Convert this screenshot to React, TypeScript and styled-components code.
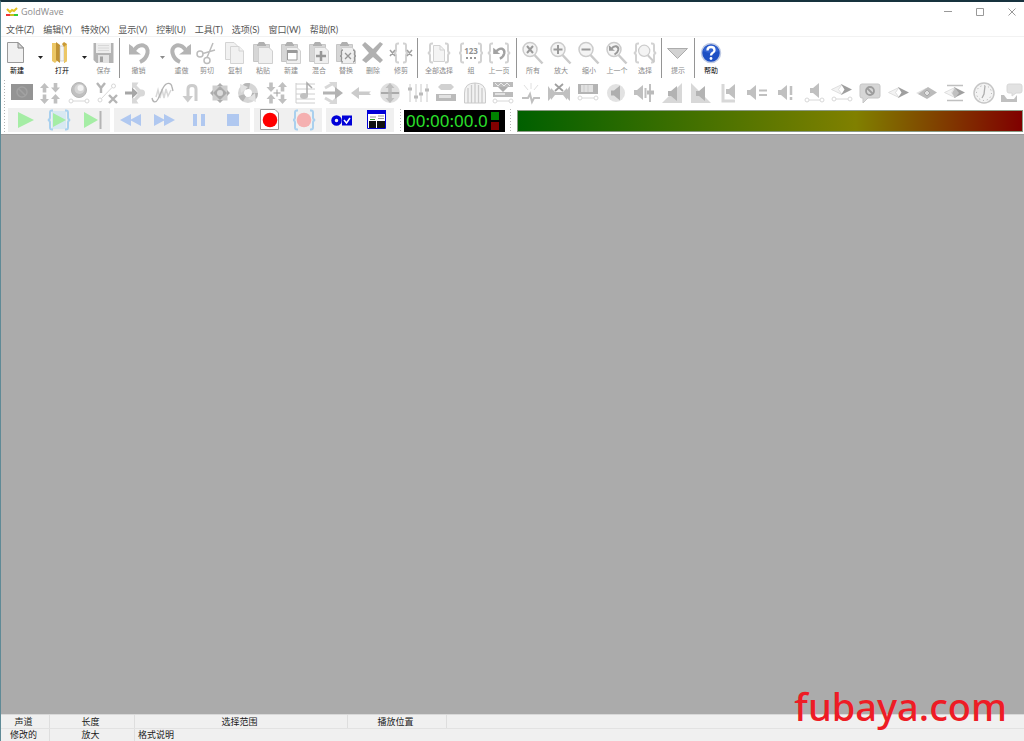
import React from "react";
import styled, { createGlobalStyle } from "styled-components";

const uiFont = `"Open Sans", "Noto Sans CJK SC", sans-serif`;

const GlobalStyle = createGlobalStyle`
  * { box-sizing: border-box; }
  body { margin: 0; background: #fff; font-family: ${uiFont}; }
  button { border: 0; margin: 0; padding: 0; background: none; font: inherit; color: inherit; }
`;

const Window = styled.div`
  position: relative;
  display: flex;
  flex-direction: column;
  min-height: 100vh;
  overflow: hidden;
  background: #fff;
  border-top: 2px solid #17323e;
  border-left: 1px solid #5f8a96;
`;

const TitleBar = styled.header`
  display: flex;
  align-items: center;
  height: 20px;
  padding-left: 5px;
`;

const Title = styled.h1`
  flex: 1;
  margin: 0 0 0 3px;
  font-size: 9px;
  line-height: 12px;
  font-weight: 400;
  color: #8c8c8c;
`;

const WindowButton = styled.button`
  display: flex;
  align-items: center;
  justify-content: center;
  width: 32px;
  height: 20px;
`;

const WindowControls = styled.div`
  display: flex;
  margin-right: -4px;
`;

const MenuBar = styled.nav`
  display: flex;
  align-items: center;
  gap: 9px;
  height: 15px;
  padding-left: 5px;
  border-bottom: 1px solid #f2f2f2;
`;

const MenuItem = styled.button`
  padding-top: 1px;
  font: 9px/14px Lato, "Noto Sans CJK SC", sans-serif;
  white-space: nowrap;
  color: #555;
`;

const MainBar = styled.div`
  display: flex;
  height: 42px;
  padding: 1px 0 0 1px;
`;

const ToolButton = styled.button<{ $w: number; $on?: boolean }>`
  display: flex;
  flex-direction: column;
  align-items: center;
  flex: none;
  width: ${(p) => p.$w}px;
  padding-top: 3px;
  font-size: 7px;
  line-height: 12px;
  white-space: nowrap;
  color: ${(p) => (p.$on ? "#000" : "#8a8a8a")};
`;

const Caret = styled.button<{ $on?: boolean }>`
  display: flex;
  justify-content: center;
  flex: none;
  width: 16px;
  padding-top: 18px;
  color: ${(p) => (p.$on ? "#222" : "#8c8c8c")};
`;

const Divider = styled.div<{ $w?: number }>`
  flex: none;
  width: ${(p) => p.$w || 5}px;
  height: 40px;
  background: linear-gradient(#959595, #959595) center / 1px 100% no-repeat;
`;

const LowerBars = styled.div`
  display: flex;
  padding-left: 3px;
  border-bottom: 1px solid #9c9c9c;
`;

const Grip = styled.div<{ $m?: number }>`
  flex: none;
  width: 1px;
  margin: 1px ${(p) => p.$m || 0}px;
  background: repeating-linear-gradient(#b4b4b4 0 1px, transparent 1px 3px);
`;

const BarStack = styled.div`
  flex: 1;
  min-width: 0;
`;

const EffectBar = styled.div`
  display: flex;
  justify-content: space-between;
  height: 28px;
  padding: 2px 0 0 5px;
`;

const EffectButton = styled.button`
  display: block;
  flex: none;
  width: 24px;
  height: 24px;
  opacity: 0.85;
`;

const ControlBar = styled.div`
  display: flex;
  height: 27px;
  padding: 1px 0 2px 3px;
`;

const ControlGroup = styled.div`
  display: flex;
  flex: none;
  margin-right: 4px;
  background: #f0f0f0;
`;

const ControlButton = styled.button`
  display: flex;
  align-items: center;
  justify-content: center;
  width: 34px;
  height: 24px;
`;

const Clock = styled.div`
  display: flex;
  align-items: center;
  justify-content: space-between;
  flex: none;
  width: 101px;
  height: 22px;
  margin: 2px 0 0 1px;
  padding: 0 6px 0 2px;
  background: #000;
  color: #2be02b;
  font: 17px/22px "Noto Sans", sans-serif;
`;

const Lamps = styled.div`
  display: grid;
  gap: 2px;
`;

const Lamp = styled.span<{ $c: string }>`
  width: 8px;
  height: 8px;
  background: ${(p) => p.$c};
`;

const Meter = styled.div`
  flex: 1;
  height: 22px;
  margin: 2px 1px 0 1px;
  border: 1px solid #8a9a84;
  background: linear-gradient(90deg, #006000, #808000 67%, #800000);
`;

const Workspace = styled.main`
  flex: 1;
  background: #ababab;
`;

const StatusBar = styled.footer`
  background: #f0f0f0;
  border-top: 1px solid #d9d9d9;
  color: #1a1a1a;
  font-size: 9px;
  line-height: 13px;
`;

const StatusRow = styled.div`
  display: flex;
  height: 13px;
  & + & { border-top: 1px solid #e2e2e2; line-height: 12px; }
`;

const StatusCell = styled.div<{ $w?: number; $left?: boolean }>`
  flex: ${(p) => (p.$w ? "none" : 1)};
  width: ${(p) => (p.$w ? `${p.$w}px` : "auto")};
  padding: 0 ${(p) => (p.$left ? 3 : 4)}px 0 ${(p) => (p.$left ? 3 : 1)}px;
  text-align: ${(p) => (p.$left ? "left" : "center")};
  border-right: ${(p) => (p.$w ? 1 : 0)}px solid #dedede;
`;

const Watermark = styled.div`
  position: absolute;
  right: 17px;
  bottom: 7px;
  color: #ee1c25;
  font: 500 38px/56px "Noto Sans", sans-serif;
`;

/* ---------- icon helpers ---------- */

const L = "#d2d2d2";
const M = "#b6b6b6";
const D = "#8f8f8f";

const Svg = ({ w = 24, h = 24, children }: { w?: number; h?: number; children: React.ReactNode }) => (
  <svg width={w} height={h} viewBox={`0 0 ${w} ${h}`} fill="none" aria-hidden="true" display="block">
    {children}
  </svg>
);

const Arrow = ({ x, y, r = 0, c = M }: { x: number; y: number; r?: number; c?: string }) => (
  <path transform={`translate(${x} ${y}) rotate(${r})`} d="M0-5 4.500 0H1.800V4.500H-1.800V0H-4.500Z" fill={c} />
);

const Nodes = ({ y = 20, a = 4, b = 20 }: { y?: number; a?: number; b?: number }) => (
  <g stroke={L}>
    <circle cx={a} cy={y} r="2" />
    <circle cx={b} cy={y} r="2" />
    <path d={`M${a + 2} ${y}H${b - 2}`} />
  </g>
);

const Speaker = ({ x = 0, y = 0, c = M }: { x?: number; y?: number; c?: string }) => (
  <path transform={`translate(${x} ${y})`} d="M0 4H3L9-1V14L3 9H0Z" fill={c} />
);

const Braces = ({ c = L, x1 = 2, x2 = 22 }: { c?: string; x1?: number; x2?: number }) => (
  <path
    stroke={c}
    strokeWidth="2"
    d={`M${x1 + 4} 2.500h-1q-2 0-2 2v5q0 2-2 2.500 2 .5 2 2.500v5q0 2 2 2h1M${x2 - 4} 2.500h1q2 0 2 2v5q0 2 2 2.500-2 .5-2 2.500v5q0 2-2 2h-1`}
  />
);

const Board = () => (
  <>
    <path d="M2.500 3.500H18.500V20.500H2.500Z" fill="#d6d6d6" stroke="#c6c6c6" />
    <path d="M6 4 8 1H13L15 4V5H6Z" fill="#b0b0b0" />
    <path d="M7.500 6.500H18L21.500 10V22.500H7.500Z" fill="#efefef" stroke="#cfcfcf" />
  </>
);

const Lens = () => (
  <>
    <path d="M13.500 14 21.500 22.500" stroke="#cacaca" strokeWidth="2.500" />
    <circle cx="9" cy="8.500" r="7" fill="#f4f4f4" stroke="#cccccc" strokeWidth="1.500" />
  </>
);

const Turn = ({ c = "#b4b4b4", tr }: { c?: string; tr?: string }) => (
  <g transform={tr}>
    <path d="M2 3 5.500 5.500 8.500 9.500 14 13.500H2Z" fill={c} />
    <path d="M7 9.500Q11 3.500 16.500 4.500 21.500 6.500 20.500 12 19 18.500 13 21" stroke={c} strokeWidth="4" />
  </g>
);

/* ---------- main toolbar icons ---------- */

const I: Record<string, React.ReactNode> = {
  new: (
    <>
      <path d="M2.500 1.500H13L18.500 7V21.500H2.500Z" fill="#f1f1f1" stroke="#9a9a9a" />
      <path d="M13 1.500V7H18.500Z" fill="#d8d8d8" stroke="#888" />
    </>
  ),
  open: (
    <>
      <path d="M2 2H7V20L5 22 2 20Z" fill="#ecc766" />
      <path d="M6 1 10 4V22L6 19Z" fill="#bf9234" />
      <path d="M10 5H14V20H10Z" fill="#f4f4f4" stroke="#bbb" strokeWidth=".6" />
      <path d="M12 3 14 1 17 3V20L14 22V6Z" fill="#c99a37" />
      <path d="M14 6 17 3V20L14 22Z" fill="#ecc766" />
    </>
  ),
  save: (
    <>
      <path d="M1.500 2H21.500V22H4.500L1.500 19Z" fill="#b3b3b3" />
      <path d="M4 2H19V12H4Z" fill="#ededed" />
      <path d="M6 4.500H17M6 7H17M6 9.500H17" stroke="#d8d8d8" />
      <path d="M6 14H17V22H6Z" fill="#e2e2e2" />
      <path d="M8 15.500H11V21H8Z" fill="#a2a2a2" />
    </>
  ),
  undo: <Turn />,
  redo: <Turn tr="matrix(-1 0 0 1 23 0)" />,
  cut: (
    <g stroke="#bcbcbc" strokeWidth="1.500">
      <circle cx="5" cy="13" r="3" />
      <circle cx="12" cy="19.500" r="3" />
      <path d="M8 12.500 20 9M12 16.500 18 2" />
    </g>
  ),
  copy: (
    <g fill="#f1f1f1" stroke="#d4d4d4">
      <path d="M2.500 1.500H11L14.500 5V18.500H2.500Z" />
      <path d="M7.500 5.500H16L20.500 10V22.500H7.500Z" />
      <path d="M16 5.500V10H20.500" />
    </g>
  ),
  paste: <Board />,
  pasteNew: (
    <>
      <Board />
      <path d="M8.500 10H18V19H8.500Z" fill="#fff" stroke="#999" />
      <path d="M8 9H18.500V12H8Z" fill="#999" />
    </>
  ),
  mix: (
    <>
      <Board />
      <path d="M14 10V20M9 15H19" stroke="#979797" strokeWidth="2.500" />
    </>
  ),
  replace: (
    <>
      <Board />
      <path d="M9 9q-2 0-1.500 3t-1.500 3q2 0 1.500 3T9 21M19 9q2 0 1.500 3t1.500 3q-2 0-1.500 3t-1.500 3M11 12 17 18M17 12 11 18" stroke="#969696" strokeWidth="1.300" />
    </>
  ),
  remove: <path d="M1 4 4 1 12 8 19 1 22 3 15 12 22 19 19 22 12 16 5 22 1 19 8 12Z" fill="#b0b0b0" />,
  trim: (
    <>
      <Braces x1={6} x2={18} />
      <path d="M1 9 6 15M6 9 1 15M18 9 23 15M23 9 18 15" stroke="#a0a0a0" strokeWidth="1.500" />
    </>
  ),
  all: (
    <>
      <Braces />
      <path d="M6.500 4.500H13L17.500 9V20.500H6.500Z" fill="#f4f4f4" stroke="#d2d2d2" />
      <path d="M13 4.500V9H17.500" stroke="#d2d2d2" />
    </>
  ),
  group: (
    <>
      <Braces x1={1} x2={23} />
      <text x="12" y="13" textAnchor="middle" fontFamily="Open Sans, sans-serif" fontWeight="700" fontSize="8" fill="#8f8f8f">123</text>
      <path d="M7 17H9M11 17H13M15 17H17" stroke="#999" strokeWidth="2" />
    </>
  ),
  prev: (
    <>
      <Braces />
      <Turn tr="translate(5 5) scale(.6)" c="#a2a2a2" />
    </>
  ),
  zAll: (<><Lens /><path d="M6 5 12 12M12 5 6 12" stroke="#999" strokeWidth="2" /></>),
  zIn: (<><Lens /><path d="M9 4V13M4.500 8.500H13.500" stroke="#999" strokeWidth="2" /></>),
  zOut: (<><Lens /><path d="M4.500 8.500H13.500" stroke="#999" strokeWidth="2" /></>),
  zPrev: (<><Lens /><Turn tr="translate(3 3) scale(.5)" c="#999" /></>),
  zSel: (<><Braces /><g transform="translate(4 3) scale(.8)"><Lens /></g></>),
  hint: <path d="M1.500 7.500H21.500L11.500 17.500Z" fill="#d2d2d2" stroke="#acacac" />,
  help: (
    <>
      <circle cx="12" cy="12" r="9.500" fill="#1d4fc4" stroke="#c0cbe4" strokeWidth="1.500" />
      <path d="M4 10A8.500 8.500 0 0 1 20 10Q12 14 4 10Z" fill="#4576df" opacity=".5" />
      <path d="M8.500 9.500Q8.500 6 12 6T15.500 9.300Q15.500 11 13.500 12 12 13 12 14.500" stroke="#fff" strokeWidth="2.300" />
      <circle cx="12" cy="17.500" r="1.400" fill="#fff" />
    </>
  ),
};

type Tool = { k: string; icon?: string; t?: string; w?: number; on?: boolean };
const tools: Tool[] = [
  { k: "b", icon: "new", t: "新建", w: 30, on: true },
  { k: "c", on: true },
  { k: "b", icon: "open", t: "打开", w: 28, on: true },
  { k: "c", on: true },
  { k: "b", icon: "save", t: "保存", w: 23 },
  { k: "s", w: 8 },
  { k: "b", icon: "undo", t: "撤销", w: 31 },
  { k: "c" },
  { k: "b", icon: "redo", t: "重做", w: 23 },
  { k: "b", icon: "cut", t: "剪切" },
  { k: "b", icon: "copy", t: "复制" },
  { k: "b", icon: "paste", t: "粘贴" },
  { k: "b", icon: "pasteNew", t: "新建" },
  { k: "b", icon: "mix", t: "混合" },
  { k: "b", icon: "replace", t: "替换", w: 26 },
  { k: "b", icon: "remove", t: "删除" },
  { k: "b", icon: "trim", t: "修剪" },
  { k: "s" },
  { k: "b", icon: "all", t: "全部选择", w: 38 },
  { k: "b", icon: "group", t: "组", w: 26 },
  { k: "b", icon: "prev", t: "上一页", w: 30 },
  { k: "s" },
  { k: "b", icon: "zAll", t: "所有" },
  { k: "b", icon: "zIn", t: "放大" },
  { k: "b", icon: "zOut", t: "缩小" },
  { k: "b", icon: "zPrev", t: "上一个" },
  { k: "b", icon: "zSel", t: "选择" },
  { k: "s" },
  { k: "b", icon: "hint", t: "提示" },
  { k: "s" },
  { k: "b", icon: "help", t: "帮助", on: true },
];

/* ---------- effect icons ---------- */

const Diamond = ({ y = 0 }: { y?: number }) => (
  <g transform={`translate(0 ${y})`}>
    <path d="M12 6.500 1.500 11.500 12 16.500 8.500 11.500Z" fill="#f2f2f2" stroke={L} strokeWidth=".8" />
    <path d="M11 6 22 11.500 11 17 14.500 11.500Z" fill={D} />
  </g>
);

const effects: [string, React.ReactNode][] = [
  ["审查", <><path d="M1 3H23V19H1Z" fill="#828282" /><circle cx="12" cy="11" r="5" stroke="#929292" strokeWidth="1.500" /><path d="M8.500 7.500 15.500 14.500" stroke="#929292" strokeWidth="1.500" /></>],
  ["压缩器", <><Arrow x={6.5} y={7} /><Arrow x={17.5} y={6.5} r={180} /><Arrow x={6.5} y={18} r={180} /><Arrow x={17.5} y={18} /></>],
  ["多普勒", <><circle cx="12" cy="9" r="7.500" fill={M} stroke="#a9a9a9" /><circle cx="12.500" cy="8" r="5" fill="#cfcfcf" /><circle cx="13.500" cy="7" r="3" fill="#f2f2f2" /><Nodes y={20} /></>],
  ["表达式", <><path d="M2 2 6 7V12M10 2 6 7M14 14 22 22M22 14 14 22" stroke="#a9a9a9" strokeWidth="2.400" /><path d="M6.500 17.500 17 6.500" stroke={L} /><circle cx="5" cy="19" r="2" stroke={L} /><circle cx="18.500" cy="5" r="2" stroke={L} /></>],
  ["动态", <><path d="M9 1.500H15.500L13.500 4.500 19 10V14L13.500 19.500 15.500 22.500H9V16L11 17.500 15.500 12 11 6.500 9 8Z" fill={L} /><circle cx="18.500" cy="12" r="3.500" fill={L} /><path d="M2 10.500H9V6.500L15 12 9 17.500V13.500H2Z" fill="#979797" /></>],
  ["回声", <><path d="M5 16 7 9 9 17 11 8 13 17 15 8 17 15 20 9" stroke={L} strokeWidth="1.500" /><path d="M1 17C2 22 5 22 7 18L12 7C15 1 20 1 21 6L22 10" stroke="#a6a6a6" strokeWidth="1.300" /></>],
  ["倒转", <><path d="M8 17V8Q8 4.500 12 4.500T16 8V20" stroke="#c4c4c4" strokeWidth="3" /><path d="M2.500 15H13L7.800 21.500Z" fill="#c4c4c4" /></>],
  ["镶边器", <><path d="M4.500 4.500H19.500V19.500H4.500Z" fill="#c6c6c6" /><path d="M12 2 15 5H9ZM12 22 9 19H15ZM2 12 5 9V15ZM22 12 19 15V9Z" fill="#a0a0a0" /><path d="M12 5 19 12 12 19 5 12Z" fill="#9c9c9c" /><circle cx="12" cy="12" r="3" fill="#d6d6d6" /></>],
  ["混响", <><circle cx="12" cy="12" r="7" stroke="#cfcfcf" strokeWidth="6" /><circle cx="12" cy="12" r="7" stroke="#aaaaaa" strokeWidth="6" strokeDasharray="5 9.660" /><path d="M4 3 12 6 5 12ZM20 21 12 18 19 12Z" fill="#ddd" /></>],
  ["音调", <><path d="M8.500 12H15.500M12 8.500V15.500" stroke={D} /><Arrow x={6} y={6} r={180} /><Arrow x={17.5} y={6} /><Arrow x={6} y={18} /><Arrow x={17.5} y={18} r={180} /></>],
  ["音阶", <><path d="M3 2V22M3 3H22M3 8H22M3 13H22M3 18H22M3 22H22" stroke="#c6c6c6" /><path d="M14 15V2L19 7" stroke="#9e9e9e" strokeWidth="1.500" /><ellipse cx="11" cy="15" rx="4" ry="3" fill={M} /></>],
  ["偏移", <><path d="M8 1H16V9ZM8 23H16V15Z" fill={L} /><path d="M4 7 11 3M4 17 11 21" stroke={L} strokeWidth="3" /><path d="M2 10.500H14V6L22 12 14 18V13.500H2Z" fill="#a6a6a6" /></>],
  ["反向", <path d="M2 12 10 6V10.500H22L20 12 22 14H10V18Z" fill="#c2c2c2" />],
  ["反转", <><circle cx="12" cy="12" r="10" fill="#dadada" /><path d="M3 12H21" stroke="#9c9c9c" strokeWidth="2" /><Arrow x={12} y={7} c="#b4b4b4" /><Arrow x={12} y={17} r={180} c="#b4b4b4" /></>],
  ["均衡器", <><path d="M4 3V21M10 3V21M15 3V21M21 3V21" stroke="#c2c2c2" /><path d="M2 8H6M8 16H12M13 13H17M19 9H23" stroke="#b0b0b0" strokeWidth="3" /></>],
  ["噪声门", <><path d="M7 3H17L20 6 17 9H7L4 6Z" fill="#cacaca" /><path d="M2 13H22V20H2Z" fill="#b0b0b0" /><path d="M5 14H17V17H5Z" fill="#dedede" /></>],
  ["滤波器", <><path d="M1.500 22V12Q1.500 2 12 2T22.500 12V22Z" fill="#f0f0f0" stroke="#c2c2c2" /><path d="M12 2V22M8.500 4V22M5 7V22M15.500 4V22M19 7V22" stroke="#c2c2c2" strokeWidth="1.300" /></>],
  ["降噪", <><path d="M2 1H22V6H2Z" fill="#b0b0b0" /><path d="M4 2 7 5 10 2 13 5 16 2 19 5" stroke="#e8e8e8" /><path d="M7 6H17L12 11Z" fill="#a0a0a0" /><path d="M2 11H22V16H2Z" fill="#b0b0b0" /><path d="M4 12H14V14H4Z" fill="#ddd" /><Nodes y={20} /></>],
  ["爆音", <><path d="M12 2V8M5 4 9 9M19 4 15 9" stroke="#dcdcdc" /><path d="M3 17H9L11 13 13 21 15 17H21" stroke={M} strokeWidth="2" /></>],
  ["静音", <><path d="M1 5 4 9V7L8 11H16L20 7V9L23 5V20L20 17V19L16 14H8L4 19V17L1 20Z" fill={M} /><path d="M8 3 16 10M16 3 8 10" stroke={D} strokeWidth="1.800" /></>],
  ["平滑器", <><path d="M2 3H22V13H2Z" fill="#a8a8a8" /><path d="M5 4H17V11H5Z" fill="#dcdcdc" /><path d="M8 4V11M12 4V11" stroke="#c6c6c6" /><Nodes y={17} /></>],
  ["音量", <><circle cx="12" cy="12" r="9" fill="#dedede" /><Speaker x={7} y={5.5} c="#a2a2a2" /></>],
  ["改变音量", <><Speaker x={2} y={5} /><path d="M13.500 7V17M18 3V21" stroke={M} strokeWidth="2" /><path d="M15 11.500H22" stroke="#b0b0b0" strokeWidth="4" /></>],
  ["淡入", <><path d="M2 22 22 2V22Z" fill={L} /><Speaker x={8} y={6} c="#a6a6a6" /></>],
  ["淡出", <><path d="M2 2 22 22H2Z" fill={L} /><Speaker x={7} y={6} c="#a6a6a6" /></>],
  ["匹配音量", <><path d="M6 3V20H18" stroke={L} strokeWidth="3" /><Speaker x={9} y={4} /></>],
  ["最大化", <><Speaker x={2} y={5} /><path d="M14 9.500H22M14 14H22" stroke={M} strokeWidth="2" /></>],
  ["自动增益", <><Speaker x={4} y={5} /><path d="M17 5V14M17 16V19" stroke={M} strokeWidth="2.500" /></>],
  ["形状音量", <><Speaker x={8} y={3} /><Nodes y={19} a={5} b={20} /></>],
  ["声像", <><Diamond y={-3} /><Nodes y={18} /></>],
  ["消除人声", <><path d="M4 3H20Q22 3 22 5V15Q22 17 20 17H10L5 22V17H4Q2 17 2 15V5Q2 3 4 3Z" fill="#d0d0d0" stroke="#bdbdbd" /><circle cx="12" cy="10" r="4" stroke="#8c8c8c" strokeWidth="1.800" /><path d="M9 7 15 13" stroke="#8c8c8c" strokeWidth="1.800" /></>],
  ["声道混合", <Diamond />],
  ["立体声中心", <><path d="M1 12 11 7 13 12 11 17Z" fill="#dcdcdc" /><path d="M3 13 13 6 22 11.500 12 18Z" fill="#b0b0b0" /><path d="M12 9 15 12 12 15 9 12Z" fill="#dcdcdc" stroke="#9a9a9a" /></>],
  ["最大匹配", <><path d="M4 4.500H20M4 19.500H20" stroke={M} strokeWidth="1.500" /><Diamond /><path d="M12 7 16 12 12 17 9 12Z" fill={M} /></>],
  ["时间弯曲", <><circle cx="12" cy="12" r="10" fill="#f2f2f2" stroke="#bdbdbd" strokeWidth="1.500" /><circle cx="12" cy="12" r="7.500" stroke="#999" strokeDasharray="1 2.927" /><path d="M13 5 12 13 10 17" stroke="#a0a0a0" strokeWidth="1.300" /></>],
  ["语音转换", <><path d="M9 3H20Q22 3 22 5V10Q22 12 20 12H16L12 15V12H9Q7 12 7 10V5Q7 3 9 3Z" fill="#ddd" stroke={L} /><path d="M1 14H4L7 18H14L17 14V21H1Z" fill={M} /></>],
];

/* ---------- transport icons ---------- */

const green = "#a5eda5";
const blue = "#b0c8f0";
const pale = "#a9d0ee";

const controlGroups: [string, React.ReactNode][][] = [
  [
    ["播放", <path d="M5 4 21 12 5 20Z" fill={green} />],
    ["播放选区", <><path d="M5 3H19V21H5Z" fill="#d8e8f2" /><path d="M6 5 19 12 6 19Z" fill={green} /><Braces c={pale} /></>],
    ["播放到结尾", <><path d="M3 4 17 12 3 20Z" fill={green} /><path d="M19.500 3V21" stroke="#b4b4b4" strokeWidth="2" /></>],
  ],
  [
    ["快退", <path d="M1 12 12 6V18ZM11 12 22 6V18Z" fill={blue} />],
    ["快进", <path d="M22 12 11 6V18ZM12 12 1 6V18Z" fill={blue} />],
    ["暂停", <path d="M6 6H10V18H6ZM14 6H18V18H14Z" fill={blue} />],
    ["停止", <path d="M6 6H18V18H6Z" fill={blue} />],
  ],
  [
    ["录音到新文件", <><path d="M1.500 1.500H16L19.500 5V21.500H1.500Z" fill="#fff" stroke="#9a9a9a" /><circle cx="11" cy="12" r="7.300" fill="#f00" /></>],
    ["录音到选区", <><circle cx="11" cy="12" r="7.300" fill="#f5b0b0" /><Braces c={pale} x1={1} x2={21} /></>],
  ],
  [
    ["控制属性", <><circle cx="5.500" cy="12.500" r="3.500" stroke="#0000d8" strokeWidth="3.500" /><path d="M11 7.500H21V17.500H11Z" fill="#0000d8" /><path d="M13 12 15.500 15 19 10" stroke="#fff" strokeWidth="1.500" /></>],
    ["设置窗口", <><path d="M2.500 2.500H20.500V20.500H2.500Z" fill="#fff" stroke="#0000d8" /><path d="M2 2H21V6H2Z" fill="#0000d8" /><path d="M5 9H11M13 8H19M13 10.500H19" stroke="#999" /><path d="M5 11.500H10" stroke="#2b9b2b" /><path d="M4 13H11V20H4ZM12 13H20V20H12Z" fill="#111" /></>],
  ],
];

const menus = ["文件(Z)", "编辑(Y)", "特效(X)", "显示(V)", "控制(U)", "工具(T)", "选项(S)", "窗口(W)", "帮助(R)"];

export default function App() {
  return (
    <Window>
      <GlobalStyle />
      <TitleBar>
        <Svg w={12} h={10}>
          <path d="M0 7H4V9H0Z" fill="#e33" />
          <path d="M4 7H8V9H4Z" fill="#c8c020" />
          <path d="M8 7H12V9H8Z" fill="#3c3" />
          <path d="M1 2 4 5 6 3 8 4 11 1" stroke="#e6c320" strokeWidth="2" />
        </Svg>
        <Title>GoldWave</Title>
        <WindowControls>
          <WindowButton aria-label="最小化"><Svg w={8} h={8}><path d="M0 3.500H8" stroke="#999" /></Svg></WindowButton>
          <WindowButton aria-label="最大化"><Svg w={8} h={8}><path d="M.5.5H7.500V7.500H.5Z" stroke="#999" /></Svg></WindowButton>
          <WindowButton aria-label="关闭"><Svg w={8} h={8}><path d="M.5.5 7.500 7.500M7.500.5.5 7.500" stroke="#999" /></Svg></WindowButton>
        </WindowControls>
      </TitleBar>
      <MenuBar>
        {menus.map((m) => <MenuItem key={m}>{m}</MenuItem>)}
      </MenuBar>
      <MainBar>
        {tools.map((t, i) => {
          if (t.k === "s") return <Divider key={i} $w={t.w} />;
          if (t.k === "c")
            return (
              <Caret key={i} $on={t.on} aria-label="更多">
                <Svg w={5} h={3}><path d="M0 0H5L2.500 3Z" fill="currentColor" /></Svg>
              </Caret>
            );
          return (
            <ToolButton key={i} $w={t.w || 28} $on={t.on}>
              <Svg>{I[t.icon as string]}</Svg>
              {t.t}
            </ToolButton>
          );
        })}
      </MainBar>
      <LowerBars>
        <Grip />
        <BarStack>
          <EffectBar>
            {effects.map(([name, icon]) => (
              <EffectButton key={name} aria-label={name}><Svg>{icon}</Svg></EffectButton>
            ))}
          </EffectBar>
          <ControlBar>
            {controlGroups.map((g, i) => (
              <ControlGroup key={i}>
                {g.map(([name, icon]) => (
                  <ControlButton key={name} aria-label={name}><Svg>{icon}</Svg></ControlButton>
                ))}
              </ControlGroup>
            ))}
            <Grip $m={2} />
            <Clock>
              00:00:00.0
              <Lamps><Lamp $c="#008400" /><Lamp $c="#840000" /></Lamps>
            </Clock>
            <Grip $m={5} />
            <Meter />
          </ControlBar>
        </BarStack>
      </LowerBars>
      <Workspace />
      <StatusBar>
        <StatusRow>
          <StatusCell $w={49}>声道</StatusCell>
          <StatusCell $w={85}>长度</StatusCell>
          <StatusCell $w={213}>选择范围</StatusCell>
          <StatusCell $w={99}>播放位置</StatusCell>
          <StatusCell />
        </StatusRow>
        <StatusRow>
          <StatusCell $w={49}>修改的</StatusCell>
          <StatusCell $w={85}>放大</StatusCell>
          <StatusCell $left>格式说明</StatusCell>
        </StatusRow>
      </StatusBar>
      <Watermark>fubaya.com</Watermark>
    </Window>
  );
}
